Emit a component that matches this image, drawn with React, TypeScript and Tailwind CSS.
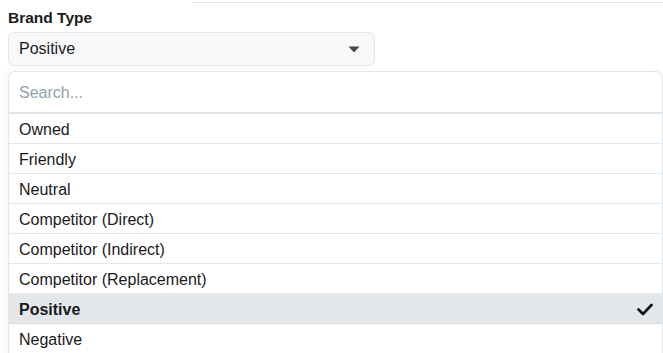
const OPTIONS = [
  "Owned",
  "Friendly",
  "Neutral",
  "Competitor (Direct)",
  "Competitor (Indirect)",
  "Competitor (Replacement)",
  "Positive",
  "Negative",
];

const SELECTED = "Positive";

export default function App() {
  return (
    <div className="w-[663px] h-[353px] overflow-hidden bg-white font-['Liberation_Sans',Arial,sans-serif] text-[#1a1a1a]">
      {/* previous field edge */}
      <div className="ml-[193px] h-[3px] border-b border-[#e3e6e9]" />

      <div className="pl-2">
        <div className="mt-[5px] h-[20px] text-[15.5px] font-bold leading-[20px]">Brand Type</div>

        {/* Select */}
        <div className="mt-[4px] flex h-[34px] w-[367px] items-center justify-between rounded-[6px] border border-[#e4e7ea] bg-[#f8f9fa] pl-[10px] pr-[14px]">
          <span className="text-[16px]">{SELECTED}</span>
          <svg width="12" height="7" viewBox="0 0 12 7" className="mt-[1px]">
            <path d="M0.5 0.5h11L6 6.5z" fill="#4a4a4a" />
          </svg>
        </div>

        {/* Menu */}
        <div className="mt-[5px] w-[655px] rounded-t-[7px] border border-b-0 border-[#e3e6e9] bg-white shadow-[-4px_0_6px_rgba(0,0,0,0.04)]">
          <div className="flex h-[42px] items-center border-b-2 border-[#dfe3e6] px-[10px] pt-[2px]">
            <span className="text-[16px] text-[#8ea2ad]">Search...</span>
          </div>
          {OPTIONS.map((opt) => {
            const active = opt === SELECTED;
            return (
              <div
                key={opt}
                className={[
                  "flex h-[30px] items-center justify-between border-b px-[10px] pt-[2px] text-[16px]",
                  active ? "bg-[#e4e7ea] border-[#d8dce0] font-bold" : "border-[#e6e9ec]",
                ].join(" ")}
              >
                <span>{opt}</span>
                {active && (
                  <svg width="16" height="13" viewBox="0 0 16 13" className="mr-[-1px]">
                    <path d="M1.5 6.5l4.5 4.5 8.5-9" fill="none" stroke="#111" strokeWidth="2.6" strokeLinecap="round" strokeLinejoin="round" />
                  </svg>
                )}
              </div>
            );
          })}
        </div>
      </div>
    </div>
  );
}
